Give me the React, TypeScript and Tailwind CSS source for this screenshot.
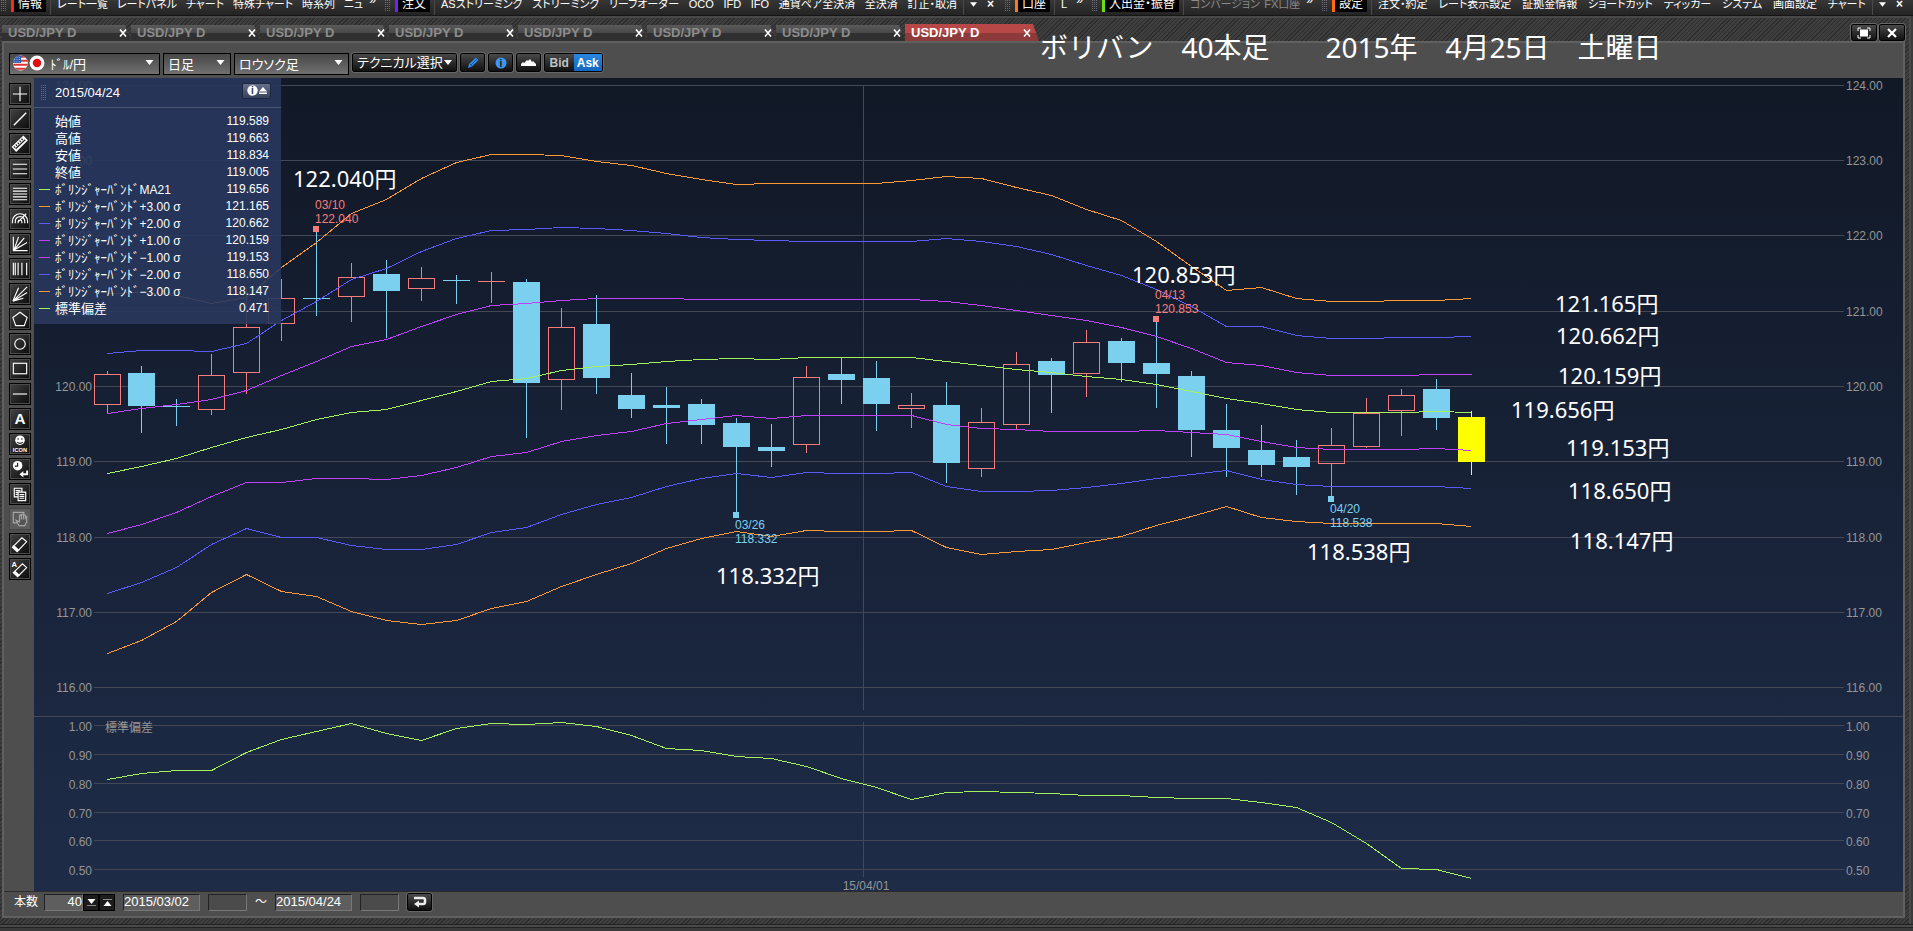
import { useState } from "react"
import type { ReactNode } from "react"
import clsx from "clsx"

type MenuGroup = {
  title?: string
  bar?: string
  items: string[]
  dim?: boolean
  tail?: boolean
  more?: boolean
  className: string
}

const menuGroups: MenuGroup[] = [
  {
    title: "情報",
    bar: "border-[#ff2a12]",
    items: ["レート一覧", "レートパネル", "チャート", "特殊チャート", "時系列", "ニュ"],
    more: true,
    className: "w-96",
  },
  {
    title: "注文",
    bar: "border-[#7a1cff]",
    items: ["ASストリーミング", "ストリーミング", "リーフオーダー", "OCO", "IFD", "IFO", "通貨ペア全決済", "全決済", "訂正・取消"],
    tail: true,
    className: "w-[620px]",
  },
  { title: "口座", bar: "border-[#ff7a12]", items: ["L"], more: true, className: "w-[87px]" },
  {
    title: "入出金・振替",
    bar: "border-[#6ae012]",
    items: ["コンバージョン", "FX口座"],
    dim: true,
    more: true,
    className: "w-[230px]",
  },
  {
    title: "設定",
    bar: "border-[#ff6a12]",
    items: ["注文・約定", "レート表示設定", "証拠金情報", "ショートカット", "ティッカー", "システム", "画面設定", "チャート"],
    tail: true,
    className: "flex-1",
  },
]

const tabs = [0, 1, 2, 3, 4, 5, 6, 7]

const legend = [
  { name: "始値", suffix: "", value: "119.589", color: "" },
  { name: "高値", suffix: "", value: "119.663", color: "" },
  { name: "安値", suffix: "", value: "118.834", color: "" },
  { name: "終値", suffix: "", value: "119.005", color: "" },
  { name: "ﾎﾞﾘﾝｼﾞｬｰﾊﾞﾝﾄﾞ", suffix: "MA21", value: "119.656", color: "bg-[#a6f05a]" },
  { name: "ﾎﾞﾘﾝｼﾞｬｰﾊﾞﾝﾄﾞ", suffix: "+3.00 σ", value: "121.165", color: "bg-[#ff9933]" },
  { name: "ﾎﾞﾘﾝｼﾞｬｰﾊﾞﾝﾄﾞ", suffix: "+2.00 σ", value: "120.662", color: "bg-[#5a5aff]" },
  { name: "ﾎﾞﾘﾝｼﾞｬｰﾊﾞﾝﾄﾞ", suffix: "+1.00 σ", value: "120.159", color: "bg-[#c040ff]" },
  { name: "ﾎﾞﾘﾝｼﾞｬｰﾊﾞﾝﾄﾞ", suffix: "−1.00 σ", value: "119.153", color: "bg-[#c040ff]" },
  { name: "ﾎﾞﾘﾝｼﾞｬｰﾊﾞﾝﾄﾞ", suffix: "−2.00 σ", value: "118.650", color: "bg-[#5a5aff]" },
  { name: "ﾎﾞﾘﾝｼﾞｬｰﾊﾞﾝﾄﾞ", suffix: "−3.00 σ", value: "118.147", color: "bg-[#ff9933]" },
  { name: "標準偏差", suffix: "", value: "0.471", color: "bg-[#a6f05a]" },
]

// [kind, high, body top, body bottom, low] in chart units
type Candle = ["up" | "down" | "last", number, number, number, number]

const candles: Candle[] = [
  ["up", 371, 374, 404, 413],
  ["down", 366, 373, 406, 433],
  ["down", 399, 406, 407, 426],
  ["up", 354, 375, 409, 415],
  ["up", 288, 327, 372, 394],
  ["up", 279, 298, 323, 341],
  ["down", 232, 298, 299, 316],
  ["up", 263, 277, 296, 322],
  ["down", 260, 274, 291, 338],
  ["up", 267, 278, 288, 301],
  ["down", 275, 280, 281, 304],
  ["up", 272, 281, 282, 303],
  ["down", 279, 282, 383, 438],
  ["up", 308, 327, 379, 410],
  ["down", 295, 324, 378, 394],
  ["down", 373, 395, 409, 418],
  ["down", 387, 405, 408, 444],
  ["down", 399, 404, 425, 444],
  ["down", 418, 423, 447, 512],
  ["down", 424, 447, 451, 467],
  ["up", 366, 377, 444, 453],
  ["down", 358, 374, 380, 404],
  ["down", 361, 378, 404, 431],
  ["up", 393, 405, 408, 428],
  ["down", 382, 405, 463, 483],
  ["up", 408, 422, 468, 477],
  ["up", 352, 364, 424, 429],
  ["down", 358, 361, 375, 413],
  ["up", 330, 342, 373, 397],
  ["down", 338, 341, 363, 382],
  ["down", 322, 363, 374, 408],
  ["down", 371, 376, 430, 457],
  ["down", 404, 430, 448, 477],
  ["down", 425, 450, 465, 477],
  ["down", 440, 457, 467, 495],
  ["up", 428, 445, 463, 496],
  ["up", 398, 413, 446, 448],
  ["up", 389, 395, 410, 436],
  ["down", 379, 389, 418, 430],
  ["last", 411, 417, 462, 475],
]

const lines = [
  {
    color: "#ff9933",
    ys: [293, 292, 295, 303, 297, 267, 242, 213, 199, 178, 162, 154, 154, 155, 161, 165, 173, 179, 184, 183, 183, 183, 183, 180, 176, 178, 187, 195, 209, 220, 241, 266, 290, 287, 298, 301, 301, 300, 300, 298],
  },
  {
    color: "#5a5aff",
    ys: [353, 350, 350, 351, 343, 320, 301, 279, 268, 251, 238, 230, 229, 227, 228, 230, 233, 237, 239, 240, 241, 241, 241, 241, 238, 241, 246, 254, 265, 275, 289, 306, 326, 326, 335, 338, 338, 337, 337, 336],
  },
  {
    color: "#c040ff",
    ys: [413, 408, 404, 399, 390, 375, 361, 346, 339, 326, 314, 305, 303, 300, 298, 298, 298, 299, 299, 299, 299, 299, 299, 299, 301, 305, 310, 315, 320, 327, 336, 348, 362, 365, 372, 375, 375, 375, 374, 374],
  },
  {
    color: "#a6f05a",
    ys: [473, 466, 458, 447, 437, 429, 419, 412, 409, 400, 391, 381, 378, 370, 366, 364, 361, 359, 358, 359, 357, 357, 357, 357, 361, 365, 369, 372, 376, 379, 384, 391, 398, 403, 409, 412, 412, 412, 411, 412],
  },
  {
    color: "#c040ff",
    ys: [533, 524, 512, 496, 482, 482, 478, 478, 479, 475, 467, 456, 452, 441, 435, 431, 423, 419, 415, 418, 415, 415, 415, 415, 424, 428, 429, 431, 431, 431, 430, 432, 434, 441, 447, 449, 449, 449, 448, 450],
  },
  {
    color: "#5a5aff",
    ys: [593, 582, 567, 544, 528, 537, 537, 545, 549, 549, 544, 532, 527, 514, 504, 497, 486, 478, 473, 477, 472, 473, 473, 472, 486, 491, 491, 490, 487, 483, 478, 474, 470, 479, 484, 486, 486, 486, 486, 488],
  },
  {
    color: "#ff9933",
    ys: [653, 640, 621, 592, 574, 591, 596, 611, 620, 624, 620, 608, 601, 586, 574, 563, 548, 538, 531, 536, 530, 531, 531, 530, 547, 554, 551, 549, 542, 536, 525, 516, 506, 517, 521, 523, 523, 523, 523, 526],
  },
  {
    color: "#a6f05a",
    ys: [779, 773, 770, 770, 752, 739, 731, 723, 733, 740, 728, 723, 724, 722, 726, 735, 748, 750, 756, 758, 766, 778, 787, 799, 792, 791, 792, 793, 795, 795, 797, 798, 798, 802, 807, 822, 843, 868, 869, 878],
  },
]

const priceAxis = [
  ["124.00", 85],
  ["123.00", 160],
  ["122.00", 235],
  ["121.00", 311],
  ["120.00", 386],
  ["119.00", 461],
  ["118.00", 537],
  ["117.00", 612],
  ["116.00", 687],
] as const

const devAxis = [
  ["1.00", 725],
  ["0.90", 754],
  ["0.80", 783],
  ["0.70", 812],
  ["0.60", 840],
  ["0.50", 869],
] as const

const markers = [
  { x: 316, y: 229, tx: 315, ty: 209, date: "03/10", price: "122.040", color: "#f77c7c" },
  { x: 1156, y: 319, tx: 1155, ty: 299, date: "04/13", price: "120.853", color: "#f77c7c" },
  { x: 736, y: 515, tx: 735, ty: 529, date: "03/26", price: "118.332", color: "#7bd0f0" },
  { x: 1331, y: 499, tx: 1330, ty: 513, date: "04/20", price: "118.538", color: "#7bd0f0" },
]

const notes = [
  { x: 293, y: 187, text: "122.040円" },
  { x: 1132, y: 283, text: "120.853円" },
  { x: 1555, y: 312, text: "121.165円" },
  { x: 1556, y: 344, text: "120.662円" },
  { x: 1558, y: 384, text: "120.159円" },
  { x: 1511, y: 418, text: "119.656円" },
  { x: 1566, y: 456, text: "119.153円" },
  { x: 1568, y: 499, text: "118.650円" },
  { x: 1570, y: 549, text: "118.147円" },
  { x: 1307, y: 560, text: "118.538円" },
  { x: 716, y: 584, text: "118.332円" },
]

const candleX = (i: number) => (i === 0 ? 107 : 106 + i * 35)

const candleColor = { up: "#f77c7c", down: "#7bd0f0", last: "#ffff00" }

function CandleShape({ candle, index }: { candle: Candle; index: number }) {
  const [kind, high, top, bottom, low] = candle
  const x = candleX(index)
  const color = candleColor[kind]
  const flat = bottom - top <= 1
  return (
    <g fill={color}>
      <rect x={x} y={high} width={1} height={top - high} />
      <rect x={x} y={bottom} width={1} height={low - bottom} />
      {kind === "up" && !flat ? (
        <rect x={x - 12.5} y={top + 0.5} width={26} height={bottom - top} fill="none" stroke={color} />
      ) : (
        <rect x={x - 13} y={top} width={27} height={bottom - top} />
      )}
    </g>
  )
}

function Chart() {
  return (
    <svg viewBox="34 78 1869 813" className="block h-auto w-full" role="img" aria-label="USD/JPY D">
      <defs>
        <linearGradient id="sky" x1="0" y1="0" x2="0" y2="1">
          <stop offset="0" stopColor="#111826" />
          <stop offset="1" stopColor="#1e2c48" />
        </linearGradient>
      </defs>
      <rect x={34} y={78} width={1869} height={813} fill="url(#sky)" />

      <g fill="#444854" shapeRendering="crispEdges">
        {[...priceAxis, ...devAxis].map(([label, y]) => (
          <rect key={label} x={94} y={y} width={1750} height={1} />
        ))}
        <rect x={34} y={716} width={1869} height={1} />
        <rect x={863} y={85} width={1} height={625} />
        <rect x={863} y={722} width={1} height={155} />
      </g>

      <g fill="#959595" fontSize={12}>
        {priceAxis.map(([label, y]) => (
          <g key={label}>
            <text x={92} y={y + 5} textAnchor="end">{label}</text>
            <text x={1846} y={y + 5}>{label}</text>
          </g>
        ))}
        {devAxis.map(([label, y]) => (
          <g key={label}>
            <text x={92} y={y + 6} textAnchor="end">{label}</text>
            <text x={1846} y={y + 6}>{label}</text>
          </g>
        ))}
        <text x={105} y={732}>標準偏差</text>
        <text x={866} y={890} textAnchor="middle">15/04/01</text>
      </g>

      <g shapeRendering="crispEdges">
        {candles.map((c, i) => (
          <CandleShape key={i} candle={c} index={i} />
        ))}
        {lines.map((line, i) => (
          <polyline
            key={i}
            fill="none"
            stroke={line.color}
            points={line.ys.map((y, n) => `${candleX(n) + 0.5},${y + 0.5}`).join(" ")}
          />
        ))}
      </g>

      {markers.map((m) => (
        <g key={m.date} fill={m.color} fontSize={12}>
          <rect x={m.x - 3} y={m.y - 3} width={6} height={6} />
          <text x={m.tx} y={m.ty}>{m.date}</text>
          <text x={m.tx} y={m.ty + 14}>{m.price}</text>
        </g>
      ))}

      <g fill="#fff" className="font-['Noto_Sans','Noto_Sans_CJK_JP',sans-serif]" fontSize={22}>
        {notes.map((n) => (
          <text key={n.text} x={n.x} y={n.y}>{n.text}</text>
        ))}
      </g>
    </svg>
  )
}

const tools: { label: string; icon: ReactNode; disabled?: boolean }[] = [
  { label: "十字カーソル", icon: <path d="M10.5 3v15M3 10.5h15" /> },
  { label: "トレンドライン", icon: <path d="M4 17L17 4" strokeWidth={1.5} /> },
  {
    label: "チャネル",
    icon: (
      <>
        <path d="M2.500 13.500L14 2.500L18 6.500L6.500 18Z" fill="#fff" />
        <path d="M4 13l1.500 1.500M6 11l1.500 1.500M8 9l1.500 1.500M10 7l1.500 1.500M12 5l1.500 1.500M6 15.500l10-9.500" stroke="#222" />
      </>
    ),
  },
  { label: "水平線3本", icon: <path d="M3 5.500h15M3 10.500h15M3 15.500h15" /> },
  { label: "フィボナッチ", icon: <path d="M3 4.500h15M3 7.500h15M3 10.500h15M3 13.500h15M3 16.500h15" /> },
  {
    label: "ファン",
    icon: <path d="M2.500 15v-2a8 8 0 0 1 16 0v2M5.500 15v-2a5 5 0 0 1 10 0v2M8.500 15v-1.500a2 2 0 0 1 4 0V15M8 14l9-9" />,
  },
  { label: "ギャンファン", icon: <path d="M3.500 3v14.500h15M4 17L9 3M4 17L15 4M4 17L18 9" /> },
  { label: "タイムゾーン", icon: <path d="M3.500 4v13M5.500 4v13M8.500 4v13M12.500 4v13M17.500 4v13" /> },
  { label: "スピードライン", icon: <path d="M3 18L9 4M3 18L18 3M3 18l15-9M3 18l11-3" /> },
  { label: "五角形", icon: <path d="M10.500 3.500L18 9l-3 8.500H6L3 9Z" /> },
  { label: "円", icon: <circle cx={10.5} cy={10.5} r={5.5} /> },
  { label: "四角形", icon: <rect x={3.5} y={4.5} width={14} height={11} /> },
  { label: "水平線", icon: <path d="M3 10.500h15" /> },
  {
    label: "テキスト",
    icon: (
      <text x={10.5} y={16} textAnchor="middle" fontSize={16} fontWeight="bold" fill="#fff" stroke="none">A</text>
    ),
  },
  {
    label: "アイコン",
    icon: (
      <>
        <circle cx={10.5} cy={6.5} r={5} fill="#fff" stroke="none" />
        <path d="M8.500 4.500v1.500M12.500 4.500v1.500M7.500 8.500q3 2.500 6 0" stroke="#222" />
        <text x={10.5} y={18.5} textAnchor="middle" fontSize={6} fontWeight="bold" fill="#fff" stroke="none">ICON</text>
      </>
    ),
  },
  {
    label: "時間足",
    icon: (
      <>
        <circle cx={8} cy={7} r={5} fill="#fff" stroke="none" />
        <path d="M8 4v3.500H5" stroke="#222" />
        <path d="M18 12v4h-5" strokeWidth={2} />
        <path d="M14 12.500v7l-4-3.500z" fill="#fff" stroke="none" />
      </>
    ),
  },
  {
    label: "コピー",
    icon: (
      <>
        <path d="M4.500 4.500h8v9h-8zM6 7h5M6 9h3M6 11h3" />
        <path d="M8.500 8.500h8v9h-8z" fill="#222" />
        <path d="M10 11h5M10 13h5M10 15h5" />
      </>
    ),
  },
  {
    label: "移動",
    disabled: true,
    icon: (
      <>
        <path d="M3.500 3.500h11v11h-11z" />
        <path d="M6.500 12l3 5.500h6l2-4V8h-1.500v3V6.500h-2V11V5.500h-2V11V6.500h-2v7z" fill="#555" />
      </>
    ),
  },
  {
    label: "消去",
    icon: (
      <>
        <path d="M4 12.500L12.500 4l5 4L9 17z" />
        <path d="M4 12.500L9 17l-1.500 1.500-5-4.500z" fill="#fff" />
      </>
    ),
  },
  {
    label: "全消去",
    icon: (
      <>
        <path d="M5 13L13 5l4.500 4-8 8z" />
        <path d="M5 13l4.500 4L8 18.500 3.500 14.500z" fill="#fff" />
        <text x={1.5} y={8} fontSize={8} fontWeight="bold" fill="#fff" stroke="none">A</text>
      </>
    ),
  },
]

const darkButton = "rounded-xs border border-black bg-linear-to-b from-[#4a4a4a] to-[#111] outline outline-[#666]"

function Grip({ className }: { className?: string }) {
  return (
    <span
      className={clsx(
        "w-[7px] shrink-0 bg-[conic-gradient(#8f95a5_25%,transparent_0)] bg-size-[2px_2px] opacity-60",
        className,
      )}
    />
  )
}

function Caret({ className }: { className?: string }) {
  return (
    <svg viewBox="0 0 8 5" className={clsx("h-[5px] w-2", className)}>
      <path d="M0 0h8L4 5z" fill="currentColor" />
    </svg>
  )
}

function MenuBar() {
  return (
    <nav className="flex h-4 items-start overflow-hidden border-b border-[#151515] bg-linear-to-b from-[#363636] to-[#242424] text-xs whitespace-nowrap text-white">
      {menuGroups.map((g) => (
        <div key={g.title} className={clsx("flex h-4 min-w-0 items-start overflow-hidden pr-1", g.className)}>
          <Grip className="h-3" />
          <button
            type="button"
            className={clsx("-mt-1 ml-1 h-4 shrink-0 border-l-[3px] bg-black px-1 leading-4 [font-feature-settings:'palt']", g.bar)}
          >
            {g.title}
          </button>
          <span className="ml-1 h-full w-px bg-[#4a4a4a]" />
          <div
            className={clsx(
              "-mt-1 flex min-w-0 flex-1 justify-between overflow-hidden px-1.5 text-[11px] [font-feature-settings:'palt']",
              g.dim && "text-[#8a8a8a]",
            )}
          >
            {g.items.map((item) => (
              <button key={item} type="button" className="h-4 leading-4">{item}</button>
            ))}
          </div>
          {g.more && <span className="-mt-2 mr-1 h-4 leading-4">»</span>}
          {g.tail && (
            <div className="flex h-full items-start gap-2.5 border-l border-[#4a4a4a] px-1.5">
              <Caret className="mt-0.5 w-[7px]" />
              <span className="-mt-1 h-4 font-bold leading-4">×</span>
            </div>
          )}
        </div>
      ))}
    </nav>
  )
}

function TabBar() {
  const [active, setActive] = useState(7)
  return (
    <div className="flex h-[23px] items-end justify-between pr-1 pl-0.5">
      <div className="flex items-end">
        {tabs.map((t) => (
          <div
            key={t}
            className={clsx(
              "flex w-[129px] items-center justify-between pr-1 pl-1.5 [clip-path:polygon(0_0,calc(100%-6px)_0,100%_100%,0_100%)] last:w-[134px] last:pr-2",
              t === active
                ? "h-[17px] bg-linear-to-b from-[#b84848] from-50% to-[#8c3a3a] to-50% text-white"
                : "h-4 bg-linear-to-b from-[#5a5a5a] via-[#484848] via-50% to-[#303030] to-50% text-[#8c8c8c]",
            )}
          >
            <button type="button" onClick={() => setActive(t)} className="text-[13px] leading-4 font-bold">
              USD/JPY D
            </button>
            <button type="button" aria-label="閉じる" className="text-white">
              <svg viewBox="0 0 8 8" className="size-2">
                <path d="M1 0.500l6 7M7 0.500l-6 7" stroke="currentColor" strokeWidth={1.6} />
              </svg>
            </button>
          </div>
        ))}
      </div>
      <div className="flex gap-0.5">
        <button type="button" aria-label="最大化" className={clsx("flex h-[17px] w-[26px] items-center justify-center", darkButton)}>
          <svg viewBox="0 0 14 12" className="h-3 w-3.5">
            <path d="M3 2.500h8v7H3z" fill="#fff" />
            <path d="M1 4V1h3M10 1h3v3M13 8v3h-3M4 11H1V8" fill="none" stroke="#fff" />
          </svg>
        </button>
        <button type="button" aria-label="閉じる" className={clsx("flex h-[17px] w-[26px] items-center justify-center", darkButton)}>
          <svg viewBox="0 0 10 10" className="size-2.5">
            <path d="M1 1l8 8M9 1L1 9" stroke="#fff" strokeWidth={2.2} />
          </svg>
        </button>
      </div>
    </div>
  )
}

function SelectBox({ label, value, className, children }: { label: string; value: string; className: string; children?: ReactNode }) {
  return (
    <div className={clsx("relative h-[22px]", className)}>
      <select
        aria-label={label}
        defaultValue={value}
        className={clsx(
          "size-full appearance-none border border-black bg-linear-to-b from-[#484848] to-[#707070] pr-4 text-[13px] text-white [font-feature-settings:'palt']",
          children ? "pl-10" : "pl-1",
        )}
      >
        <option>{value}</option>
      </select>
      {children}
      <Caret className="pointer-events-none absolute top-2 right-1.5 w-[9px] text-white" />
    </div>
  )
}

function Flags() {
  return (
    <svg viewBox="0 0 28 14" className="pointer-events-none absolute top-[3px] left-1 h-4 w-8">
      <defs>
        <clipPath id="us">
          <circle cx={6.5} cy={7} r={6.5} />
        </clipPath>
      </defs>
      <g clipPath="url(#us)">
        <rect width={14} height={14} fill="#fff" />
        <path d="M0 1.500h14M0 5h14M0 8.500h14M0 12h14" stroke="#d33" strokeWidth={1.700} />
        <rect width={7} height={7} fill="#2a5ab0" />
        <path d="M1 2h6M1 4h6M1 6h6" stroke="#b8ccf0" strokeWidth={0.7} strokeDasharray="1 1" />
      </g>
      <circle cx={21} cy={7} r={6.5} fill="#fff" />
      <circle cx={21} cy={7} r={3.7} fill="#e01010" />
    </svg>
  )
}

function Toolbar() {
  return (
    <div className="flex h-[35px] items-center gap-[3px] pt-1 pl-[5px]">
      <SelectBox label="通貨ペア" value="ﾄﾞﾙ/円" className="w-[151px]">
        <Flags />
      </SelectBox>
      <SelectBox label="足種" value="日足" className="w-[68px]" />
      <SelectBox label="チャート種類" value="ロウソク足" className="w-[115px]" />
      <button
        type="button"
        className={clsx(
          "flex h-[19px] w-[105px] items-center justify-between px-1 text-[13px] leading-4 whitespace-nowrap text-white [font-feature-settings:'palt']",
          darkButton,
        )}
      >
        テクニカル選択
        <Caret />
      </button>
      <button type="button" aria-label="描画" className={clsx("flex h-[19px] w-[25px] items-center justify-center", darkButton)}>
        <svg viewBox="0 0 12 12" className="size-3">
          <path d="M1 11l1-4L9 0.500 11.500 3 5 9.500z" fill="#2f8cf0" />
          <path d="M3 7l2 2M4 8l6-6" stroke="#184a88" strokeWidth={0.8} />
        </svg>
      </button>
      <button type="button" aria-label="情報" className={clsx("flex h-[19px] w-[25px] items-center justify-center", darkButton)}>
        <svg viewBox="0 0 12 12" className="size-3">
          <circle cx={6} cy={6} r={5.5} fill="#3c96f5" />
          <text x={6} y={9.5} textAnchor="middle" fontSize={10} fontWeight="bold" fill="#111">i</text>
        </svg>
      </button>
      <button type="button" aria-label="エリア" className={clsx("flex h-[19px] w-[25px] items-center justify-center", darkButton)}>
        <svg viewBox="0 0 15 7" className="h-[7px] w-[15px]">
          <path d="M0 7V5l2-2 1 1 3-3 1 1 2-2 2 3 1-1 2 2 1 1v2z" fill="#fff" />
        </svg>
      </button>
      <div className={clsx("flex h-[19px] w-[59px] overflow-hidden text-xs font-bold", darkButton)}>
        <button type="button" className="flex-1 text-[#c0c0c0]">Bid</button>
        <button type="button" className="flex-1 bg-linear-to-b from-[#2a88e0] to-[#1565c0] text-white">Ask</button>
      </div>
    </div>
  )
}

function InfoPanel() {
  return (
    <section className="absolute top-0 left-0 h-[246px] w-[247px] bg-[#28375d]/90 text-white">
      <header className="flex h-[30px] items-center justify-between border-b border-[#4b5470] pr-2.5 pl-1.5">
        <div className="flex items-center gap-2">
          <Grip className="h-4" />
          <span className="text-[13px] leading-4">2015/04/24</span>
        </div>
        <button type="button" aria-label="折りたたむ" className="mb-1 flex h-4 w-[29px] items-center justify-center rounded-xs border border-[#1d2740] bg-linear-to-b from-[#66708c] to-[#37415e]">
          <svg viewBox="0 0 20 11" className="h-[11px] w-5">
            <circle cx={5.5} cy={5.5} r={5.2} fill="#fff" />
            <text x={5.5} y={9} textAnchor="middle" fontSize={10} fontWeight="bold" fill="#2a3555">i</text>
            <path d="M12 6.500h8L16 2zM12 7.500h8V9h-8z" fill="#fff" />
          </svg>
        </button>
      </header>
      <table className="mt-[5px] w-full border-collapse">
        <tbody>
          {legend.map((row) => (
            <tr key={row.name + row.suffix}>
              <td className="w-[21px] p-0 pl-[5px]">
                {row.color && <div className={clsx("h-px w-[11px]", row.color)} />}
              </td>
              <th scope="row" className="p-0 text-left font-normal">
                <div className="flex h-[17px] items-center text-[13px] leading-[17px] whitespace-nowrap">
                  {row.name}
                  <span className="text-xs">{row.suffix}</span>
                </div>
              </th>
              <td className="p-0 pr-3 text-right">
                <div className="h-[17px] text-xs leading-[17px]">{row.value}</div>
              </td>
            </tr>
          ))}
        </tbody>
      </table>
    </section>
  )
}

function ToolRail() {
  return (
    <div className="flex w-[30px] shrink-0 flex-col items-start gap-[3px] pt-[5px] pl-[5px]">
      {tools.map((tool) => (
        <button
          key={tool.label}
          type="button"
          aria-label={tool.label}
          disabled={tool.disabled}
          className={clsx(
            "size-[22px] border",
            tool.disabled
              ? "border-[#444] bg-[#606060] opacity-80"
              : "border-black bg-linear-to-br from-[#444] to-[#0c0c0c] shadow-[inset_0_0_0_1px_#4a4a4a]",
          )}
        >
          <svg viewBox="0 0 21 21" className="size-5" fill="none" stroke={tool.disabled ? "#bbb" : "#fff"} strokeWidth={1.2}>
            {tool.icon}
          </svg>
        </button>
      ))}
    </div>
  )
}

function BottomBar() {
  const box = "h-[17px] border border-t-[#222] border-l-[#222] border-r-[#777] border-b-[#777] text-[13px] text-white"
  return (
    <form className="flex h-[25px] items-center border-t border-[#2c2c2c] pb-1 pl-2.5 text-xs text-white">
      <label htmlFor="bars" className="mr-1.5">本数</label>
      <input id="bars" defaultValue="40" className={clsx("w-[39px] bg-[#5e5e5e] text-right", box)} />
      <button type="button" aria-label="減らす" className="flex h-[17px] w-4 flex-col items-center justify-center gap-px border border-black bg-[#1c1c1c]">
        <Caret className="w-[9px]" />
        <span className="h-px w-[9px] bg-[#888]" />
      </button>
      <button type="button" aria-label="増やす" className="flex h-[17px] w-4 flex-col items-center justify-center gap-px border border-black bg-[#1c1c1c]">
        <span className="h-px w-[9px] bg-[#888]" />
        <Caret className="w-[9px] rotate-180" />
      </button>
      <input aria-label="開始日" defaultValue="2015/03/02" className={clsx("ml-2 w-[77px] bg-[#5e5e5e]", box)} />
      <input aria-label="開始時刻" className={clsx("ml-2 w-[39px] bg-[#4b4b4b]", box)} />
      <span className="mx-2">～</span>
      <input aria-label="終了日" defaultValue="2015/04/24" className={clsx("w-[77px] bg-[#5e5e5e]", box)} />
      <input aria-label="終了時刻" className={clsx("ml-2 w-[39px] bg-[#4b4b4b]", box)} />
      <button type="button" aria-label="戻す" className={clsx("ml-2 flex h-[18px] w-[25px] items-center justify-center", darkButton)}>
        <svg viewBox="0 0 14 12" className="h-3 w-3.5" fill="none" stroke="#eee" strokeWidth={2.5}>
          <path d="M1 2h9a2 2 0 0 1 2 2v2a2 2 0 0 1-2 2H5" />
          <path d="M6 4.500v7L1 8z" fill="#eee" stroke="none" />
        </svg>
      </button>
    </form>
  )
}

export default function App() {
  return (
    <div className="min-h-screen overflow-hidden bg-[#3a3a3a] font-['Liberation_Sans','Noto_Sans_CJK_JP',sans-serif]">
      <MenuBar />
      <div className="mr-0.5 border-t-2 border-r-2 border-[#484848] bg-[repeating-linear-gradient(135deg,#2e2e2e_0_1px,#3e3e3e_1px_3px)] pb-1.5">
        <TabBar />
        <main className="relative mr-1 ml-0.5 border-2 border-[#606060] bg-[#4e4e4e]">
          <p className="pointer-events-none absolute -top-3.5 left-[1036px] font-['Noto_Sans','Noto_Sans_CJK_JP',sans-serif] text-[28px] leading-9 whitespace-pre text-white">
            ボリバン　40本足　　2015年　4月25日　土曜日
          </p>
          <Toolbar />
          <div className="flex">
            <ToolRail />
            <div className="relative min-w-0 flex-1">
              <Chart />
              <InfoPanel />
            </div>
          </div>
          <BottomBar />
        </main>
      </div>
      <div className="h-1 border-y border-y-[#222] bg-[#484848]" />
    </div>
  )
}
